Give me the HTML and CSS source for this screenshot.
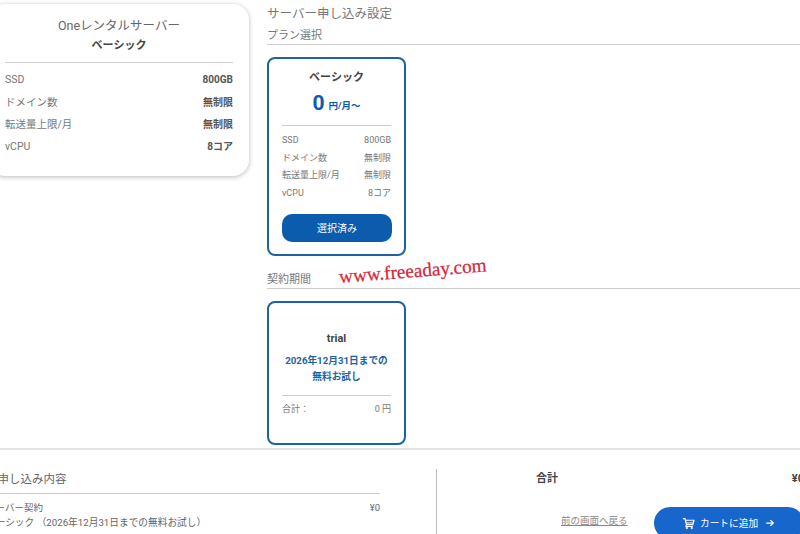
FILE: index.html
```html
<!DOCTYPE html>
<html lang="ja">
<head>
<meta charset="utf-8">
<title>サーバー申し込み設定</title>
<link rel="stylesheet" href="styles.css">
</head>
<body>
<div class="page">
  <div class="main">
    <aside class="summary">
      <div class="summary-name">Oneレンタルサーバー</div>
      <div class="summary-plan">ベーシック</div>
      <div class="summary-specs">
        <div class="spec"><span>SSD</span><b>800GB</b></div>
        <div class="spec"><span>ドメイン数</span><b>無制限</b></div>
        <div class="spec"><span>転送量上限/月</span><b>無制限</b></div>
        <div class="spec"><span>vCPU</span><b>8コア</b></div>
      </div>
    </aside>
    <section class="settings">
      <h1 class="title">サーバー申し込み設定</h1>
      <h2 class="section-head">プラン選択</h2>
      <div class="card plan-card">
        <div class="plan-name">ベーシック</div>
        <div class="price"><strong>0</strong><span>円/月～</span></div>
        <div class="card-specs">
          <div class="card-row"><span>SSD</span><span>800GB</span></div>
          <div class="card-row"><span>ドメイン数</span><span>無制限</span></div>
          <div class="card-row"><span>転送量上限/月</span><span>無制限</span></div>
          <div class="card-row"><span>vCPU</span><span>8コア</span></div>
        </div>
        <button class="selected-btn">選択済み</button>
      </div>
      <div class="period-head">
        <h2 class="section-head">契約期間</h2>
        <span class="watermark">www.freeaday.com</span>
      </div>
      <div class="card term-card">
        <div class="term-name">trial</div>
        <div class="term-desc">2026年12月31日までの<br>無料お試し</div>
        <div class="term-total"><span>合計：</span><span>0 円</span></div>
      </div>
    </section>
  </div>
  <footer class="footer">
    <div class="order">
      <h3 class="order-title">お申し込み内容</h3>
      <div class="order-row"><span>サーバー契約</span><span>¥0</span></div>
      <div class="order-sub">ベーシック （2026年12月31日までの無料お試し）</div>
    </div>
    <div class="checkout">
      <div class="total"><span>合計</span><span>¥0</span></div>
      <div class="actions">
        <a class="back" href="#">前の画面へ戻る</a>
        <button class="cart-btn">
          <svg class="cart-icon" viewBox="0 0 24 24" aria-hidden="true"><path d="M1.5 3h4l.9 3M6.4 6H22l-2 8H8.2L6.4 6zM8.2 14l-.8 3.5H20" fill="none" stroke="currentColor" stroke-width="2.2"/><rect x="7" y="10" width="13" height="1.8" fill="currentColor"/><circle cx="9" cy="20.5" r="2" fill="currentColor"/><circle cx="18" cy="20.5" r="2" fill="currentColor"/></svg>
          <span>カートに追加</span>
          <svg class="arrow-icon" viewBox="0 0 24 24" aria-hidden="true"><path d="M3 12h17M13 5l7 7-7 7" fill="none" stroke="currentColor" stroke-width="3"/></svg>
        </button>
      </div>
    </div>
  </footer>
</div>
</body>
</html>
```
FILE: styles.css
```css
* { box-sizing: border-box; }
html, body { margin: 0; padding: 0; height: 100%; overflow: hidden; background: #fff; }
body { font-family: Roboto, "Noto Sans CJK JP", sans-serif; color: #555; font-size: 10px; }
h1, h2, h3 { margin: 0; font-weight: 400; }
.page { width: 800px; height: 534px; display: flex; flex-direction: column; overflow: hidden; }
.main { height: 448px; flex: none; display: flex; align-items: flex-start; overflow: hidden; }

.summary { flex: none; width: 260px; height: 172px; margin: 4px 0 0 -11px; padding: 13px 16px 0; background: #fff; border-radius: 16px; box-shadow: 0 1px 5px rgba(0,0,0,.28); text-align: center; }
.summary-name { font-size: 12.5px; line-height: 18px; color: #666; }
.summary-plan { font-size: 11px; line-height: 18px; margin-top: 2px; font-weight: 700; color: #444; }
.summary-specs { margin-top: 7px; padding-top: 6px; border-top: 1px solid #ccc; }
.spec { display: flex; justify-content: space-between; height: 22.4px; align-items: center; font-size: 10.5px; line-height: 16px; color: #777; }
.spec b { color: #555; font-size: 10px; font-weight: 700; }

.settings { flex: 1; min-width: 0; margin-left: 18px; }
.title { font-size: 12.5px; line-height: 18px; margin-top: 5px; color: #777; }
.section-head { font-size: 11px; line-height: 15px; height: 17px; color: #777; border-bottom: 1px solid #ccc; }
.settings > .section-head { margin-top: 5px; }

.card { width: 139px; border: 2px solid #1c639f; border-radius: 8px; background: #fff; padding: 0 13px; }
.plan-card { height: 199px; padding-top: 11px; text-align: center; margin-top: 12px; }
.plan-name { font-size: 11px; line-height: 16px; font-weight: 700; color: #444; }
.price { margin-top: 5px; height: 24px; display: flex; justify-content: center; align-items: center; gap: 4px; color: #0b5cad; }
.price strong { font-size: 21px; font-weight: 700; }
.price span { font-size: 9.5px; font-weight: 700; margin-top: 4px; }
.card-specs { margin-top: 10px; padding-top: 5px; border-top: 1px solid #ccc; }
.card-row { display: flex; justify-content: space-between; align-items: center; height: 17.7px; font-size: 9px; line-height: 14px; color: #777; }
.selected-btn { display: block; width: 110px; height: 28px; margin-top: 12px; padding: 0; border: 0; border-radius: 10px; background: #0b5cad; color: #fff; font: 400 10px Roboto, "Noto Sans CJK JP", sans-serif; }

.period-head { position: relative; margin-top: 16px; }
.watermark { position: absolute; left: 73px; top: -6px; font: 400 19.2px "Liberation Serif", serif; -webkit-text-stroke: .25px #d8263a; color: #d8263a; transform: rotate(-4.5deg); transform-origin: left bottom; white-space: nowrap; }

.term-card { height: 144px; padding-top: 28px; text-align: center; margin-top: 12px; }
.term-name { font-size: 11px; line-height: 16px; font-weight: 700; color: #444; }
.term-desc { margin-top: 6px; font-size: 9.7px; line-height: 16px; font-weight: 700; color: #1c639f; }
.term-total { display: flex; justify-content: space-between; margin-top: 10px; padding-top: 7px; border-top: 1px solid #ccc; font-size: 9px; line-height: 13px; color: #777; }

.footer { flex: 1; display: flex; border-top: 2px solid #e4e4e4; background: #fff; }
.order { flex: none; width: 394px; margin-left: -14px; padding-top: 20px; }
.order-title { font-size: 11.5px; line-height: 18px; color: #666; border-bottom: 1px solid #ccc; padding-bottom: 5px; }
.order-row { display: flex; justify-content: space-between; margin-top: 7px; font-size: 9.5px; line-height: 14px; color: #666; }
.order-sub { margin-top: 1px; font-size: 9.7px; line-height: 14px; color: #666; white-space: nowrap; }
.checkout { flex: none; width: 400px; margin: 19px 0 0 56px; height: 70px; border-left: 1px solid #bbb; padding-left: 99px; }
.total { display: flex; justify-content: space-between; font-size: 11px; font-weight: 700; line-height: 18px; margin-top: 1px; color: #444; width: 268px; }
.actions { display: flex; align-items: flex-start; margin: 19px 0 0 25px; }
.back { font-size: 9.5px; line-height: 14px; margin-top: 7px; color: #888; text-decoration: underline; }
.cart-btn { flex: none; display: flex; align-items: center; justify-content: center; gap: 5px; width: 150px; height: 32px; margin-left: 26px; padding: 0; border: 0; border-radius: 16px; background: #1766cc; color: #fff; font: 400 9.7px Roboto, "Noto Sans CJK JP", sans-serif; }
.cart-icon { width: 13px; height: 13px; }
.arrow-icon { width: 10px; height: 10px; margin-left: 2px; }
```
